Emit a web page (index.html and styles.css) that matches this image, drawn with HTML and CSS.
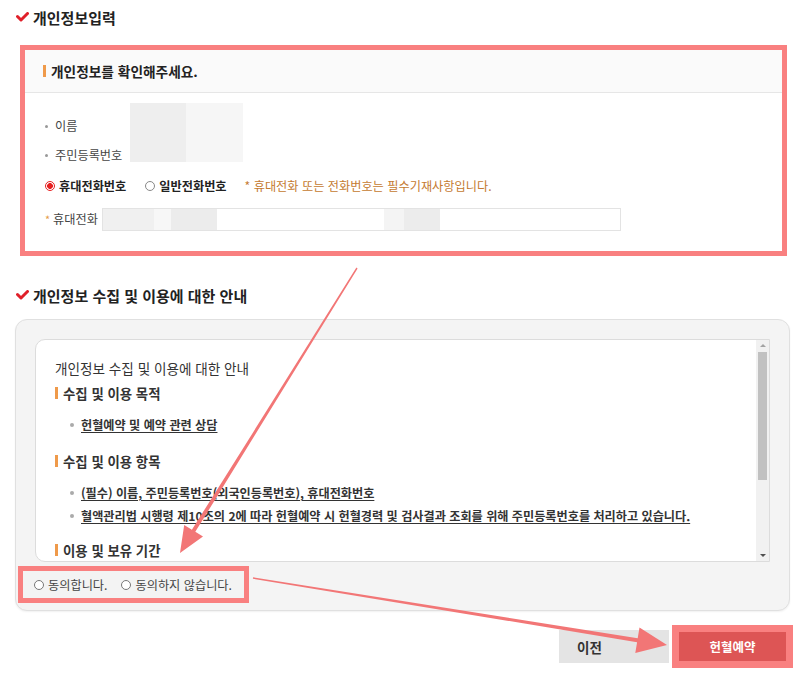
FILE: index.html
```html
<!DOCTYPE html>
<html lang="ko">
<head>
<meta charset="utf-8">
<title>개인정보입력</title>
<link rel="stylesheet" href="styles.css">
</head>
<body>
<div class="page">
  <h2 class="sec-title sec-first">
    <svg class="check" width="13" height="10" viewBox="0 0 13 10"><path d="M1.5 4.5 L5 8 L11.5 1.5" fill="none" stroke="#e0202a" stroke-width="3" stroke-linecap="round" stroke-linejoin="round"/></svg>
    개인정보입력
  </h2>

  <div class="hl-form">
    <div class="form-head"><span class="bar"></span>개인정보를 확인해주세요.</div>
    <div class="form-body">
      <div class="info">
        <div class="labels">
          <div class="lrow lrow1"><span class="dot"></span>이름</div>
          <div class="lrow lrow2"><span class="dot"></span>주민등록번호</div>
        </div>
        <div class="mask"><span class="mask-a"></span><span class="mask-b"></span></div>
      </div>
      <div class="radio-row">
        <label class="rad"><span class="radio checked"></span>휴대전화번호</label>
        <label class="rad"><span class="radio"></span>일반전화번호</label>
        <span class="note">* 휴대전화 또는 전화번호는 필수기재사항입니다.</span>
      </div>
      <div class="phone-row">
        <span class="req">*</span><span class="phone-label">휴대전화</span>
        <div class="phone-input">
          <span class="pm pm1"></span><span class="pm pm2"></span><span class="pm pm3"></span><span class="pm pm4"></span><span class="pm pm5"></span><span class="pm pm6"></span>
        </div>
      </div>
    </div>
  </div>

  <h2 class="sec-title sec-second">
    <svg class="check" width="13" height="10" viewBox="0 0 13 10"><path d="M1.5 4.5 L5 8 L11.5 1.5" fill="none" stroke="#e0202a" stroke-width="3" stroke-linecap="round" stroke-linejoin="round"/></svg>
    개인정보 수집 및 이용에 대한 안내
  </h2>

  <div class="agree-wrap">
    <div class="terms">
      <div class="terms-content">
        <p class="terms-title">개인정보 수집 및 이용에 대한 안내</p>
        <h4 class="th th-first"><span class="bar"></span>수집 및 이용 목적</h4>
        <ul class="tl">
          <li><span class="gdot"></span><u>헌혈예약 및 예약 관련 상담</u></li>
        </ul>
        <h4 class="th"><span class="bar"></span>수집 및 이용 항목</h4>
        <ul class="tl">
          <li><span class="gdot"></span><u>(필수) 이름, 주민등록번호(외국인등록번호), 휴대전화번호</u></li>
          <li><span class="gdot"></span><u>혈액관리법 시행령 제10조의 2에 따라 헌혈예약 시 헌혈경력 및 검사결과 조회를 위해 주민등록번호를 처리하고 있습니다.</u></li>
        </ul>
        <h4 class="th th-last"><span class="bar"></span>이용 및 보유 기간</h4>
      </div>
      <div class="sbar">
        <span class="sb-up"></span>
        <span class="sb-thumb"></span>
        <span class="sb-down"></span>
      </div>
    </div>
    <div class="agree-row">
      <label class="arad"><span class="radio small"></span>동의합니다.</label>
      <label class="arad"><span class="radio small"></span>동의하지 않습니다.</label>
    </div>
  </div>

  <div class="btns">
    <button class="btn btn-prev">이전</button>
    <button class="btn btn-go">헌혈예약</button>
  </div>

  <svg class="annot" width="800" height="675" viewBox="0 0 800 675">
    <polygon fill="#f27676" points="357.6,268.4 195.3,531.8 203,536.6 180,553 184.2,525 191.9,529.8 356.4,267.6"/>
    <polygon fill="#f27676" points="252.9,578.7 637.1,642.2 635.3,653.0 667,645 639.5,627.4 637.7,638.2 253.1,577.3"/>
  </svg>
</div>
</body>
</html>
```

FILE: styles.css
```css
* { box-sizing: border-box; }
html, body { margin: 0; padding: 0; background: #fff; }
body {
  font-family: "Noto Sans CJK KR", "Noto Sans", sans-serif;
  color: #333;
  width: 800px;
  height: 675px;
  overflow: hidden;
}
.page { position: relative; width: 800px; height: 675px; }

.sec-title {
  display: flex;
  align-items: center;
  height: 34px;
  margin: 0;
  padding-left: 16px;
  font-size: 15px;
  font-weight: 700;
  color: #222;
}
.check { margin-right: 4px; flex: none; }
.sec-first { margin-bottom: 11px; }
.sec-second { margin-top: 22px; margin-bottom: 7px; }

.bar {
  display: inline-block;
  width: 3px;
  height: 12px;
  background: #ef9a4a;
  margin-right: 5px;
  flex: none;
}

/* highlighted form */
.hl-form {
  margin: 0 13px 0 20px;
  border: 5px solid #f98080;
  background: #fff;
}
.form-head {
  display: flex;
  align-items: center;
  height: 43px;
  padding-left: 18px;
  background: #fafafa;
  border-bottom: 1px solid #e6e6e6;
  font-size: 13.7px;
  font-weight: 700;
  color: #222;
}
.form-body { padding: 0 0 15px 20px; font-size: 12.2px; color: #444; }
.info { display: flex; height: 77px; }
.labels { width: 85px; padding-top: 19px; }
.lrow { display: flex; align-items: center; }
.lrow1 { height: 28px; }
.lrow2 { height: 30px; }
.dot {
  width: 3px; height: 3px; border-radius: 50%;
  background: #999; margin-right: 7px; flex: none;
}
.mask { display: flex; margin-top: 10px; height: 59px; }
.mask-a { width: 56px; background: #eeeeee; }
.mask-b { width: 57px; background: #f6f6f6; }

.radio-row { display: flex; align-items: center; height: 32px; padding-left: 0; }
.rad { display: flex; align-items: center; font-weight: 700; color: #222; font-size: 12.2px; }
.rad + .rad { margin-left: 19px; }
.radio {
  display: inline-block;
  width: 10px; height: 10px;
  border: 1px solid #888;
  border-radius: 50%;
  background: #fff;
  margin-right: 4px;
  flex: none;
}
.radio.checked {
  border-color: #e62020;
  background: radial-gradient(circle, #e62020 0 2.6px, #fff 3.2px);
}
.note { margin-left: 18px; color: #c47a30; font-size: 12.2px; }

.phone-row { display: flex; align-items: center; height: 34px; }
.req { color: #e59b4a; font-size: 11px; width: 8px; }
.phone-label { color: #444; }
.phone-input {
  display: flex;
  margin-left: 4px;
  width: 519px;
  height: 23px;
  border: 1px solid #e3e3e3;
  background: #fff;
}
.pm { display: block; height: 100%; }
.pm1 { width: 51px; background: #f0f0f0; }
.pm2 { width: 17px; background: #f7f7f7; }
.pm3 { width: 46px; background: #ececec; }
.pm4 { width: 167px; background: #fff; }
.pm5 { width: 20px; background: #f4f4f4; }
.pm6 { width: 36px; background: #ececec; }

/* agreement */
.agree-wrap {
  margin: 0 10px 0 15px;
  height: 292px;
  padding: 19px 19px 0 19px;
  background: #f4f4f4;
  border: 1px solid #e0e0e0;
  border-radius: 12px;
  box-shadow: 0 1px 2px rgba(0,0,0,0.06);
}
.terms {
  display: flex;
  height: 223px;
  background: #fff;
  border: 1px solid #dcdcdc;
  border-radius: 10px 0 0 10px;
  overflow: hidden;
}
.terms-content { flex: 1; padding: 18px 0 0 19px; overflow: hidden; }
.terms-title { margin: 0; font-size: 13.6px; line-height: 20px; color: #333; }
.th {
  display: flex; align-items: center;
  margin: 16px 0 0 0;
  font-size: 13.4px; line-height: 20px; font-weight: 700; color: #333;
}
.th-first { margin-top: 5px; }
.th-last { margin-top: 14px; }
.tl { list-style: none; margin: 12px 0 0 0; padding: 0 0 0 15px; }
.tl li {
  display: flex; align-items: center;
  font-size: 12.15px; line-height: 20px; font-weight: 700; color: #333;
  white-space: nowrap;
}
.tl li + li { margin-top: 3px; }
.gdot { width: 4px; height: 4px; border-radius: 50%; background: #aaa; margin-right: 7px; flex: none; }
.tl u { text-decoration-thickness: 1px; text-underline-offset: 2px; }

.sbar {
  width: 13px;
  flex: none;
  background: #f1f1f1;
  display: flex;
  flex-direction: column;
  align-items: center;
  padding: 4px 0;
}
.sb-up, .sb-down { width: 0; height: 0; border-left: 3px solid transparent; border-right: 3px solid transparent; }
.sb-up { border-bottom: 3px solid #a3a3a3; }
.sb-down { border-top: 3px solid #505050; margin-top: auto; }
.sb-thumb { width: 9px; height: 128px; background: #c1c1c1; margin-top: 5px; }

.agree-row {
  display: flex;
  align-items: center;
  width: 231px;
  height: 37px;
  margin: 4px 0 0 -17px;
  padding-left: 11px;
  border: 5px solid #f98080;
  background: #f3f3f3;
  font-size: 12.2px;
  color: #444;
}
.arad { display: flex; align-items: center; }
.arad + .arad { margin-left: 14px; }
.radio.small { width: 10px; height: 10px; border-color: #777; }

/* buttons */
.btns { display: flex; justify-content: flex-end; align-items: center; padding-right: 14px; margin-top: 19px; }
.btn {
  font-family: inherit;
  border: 0;
  font-weight: 700;
  cursor: pointer;
}
.btn-prev {
  width: 110px; height: 33px;
  background: #e4e4e4; color: #333; font-size: 13.5px;
  text-align: left;
  padding-left: 18px;
}
.btn-go {
  width: 107px; height: 29px;
  margin-left: 10px;
  background: #dd5555;
  color: #fff;
  font-size: 12.5px;
  outline: 7px solid #f98080;
}

.annot { position: absolute; left: 0; top: 0; pointer-events: none; }
```
